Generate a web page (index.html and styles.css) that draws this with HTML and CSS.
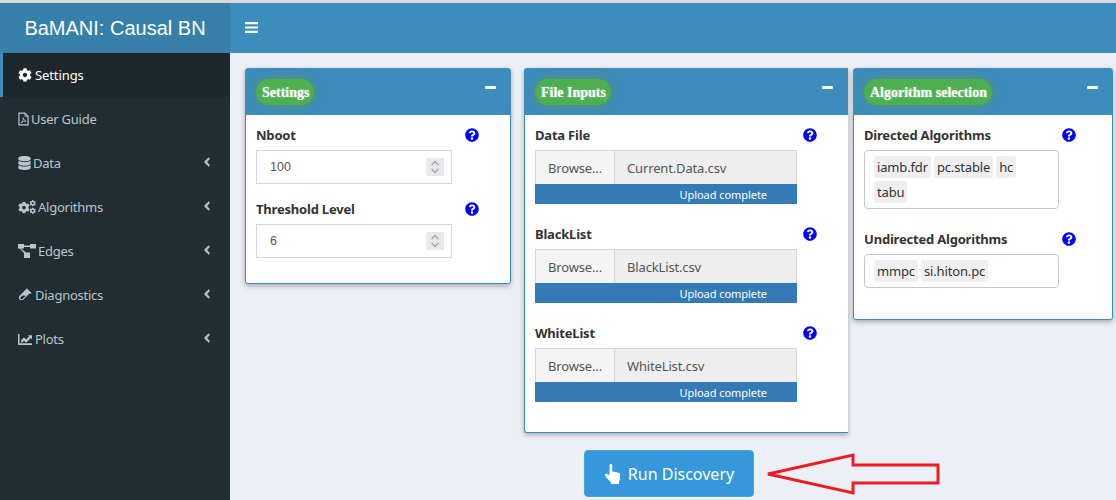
FILE: index.html
```html
<!DOCTYPE html>
<html lang="en">
<head>
<meta charset="utf-8">
<title>BaMANI: Causal BN</title>
<link rel="stylesheet" href="styles.css">
</head>
<body>
<svg class="defs" width="0" height="0" aria-hidden="true">
  <defs>
    <symbol id="i-gear" viewBox="0 0 512 512"><path d="M487.4 315.7l-42.6-24.6c4.3-23.2 4.3-47 0-70.2l42.6-24.6c4.9-2.8 7.1-8.6 5.5-14-11.1-35.6-30-67.8-54.7-94.6-3.8-4.1-10-5.1-14.8-2.3L380.8 110c-17.9-15.4-38.5-27.3-60.8-35.1V25.8c0-5.6-3.9-10.5-9.4-11.7-36.7-8.2-74.3-7.8-109.2 0-5.5 1.2-9.4 6.1-9.4 11.7V75c-22.2 7.9-42.8 19.8-60.8 35.1L88.7 85.5c-4.9-2.8-11-1.9-14.8 2.3-24.7 26.7-43.6 58.9-54.7 94.6-1.7 5.4.6 11.2 5.5 14L67.3 221c-4.3 23.2-4.3 47 0 70.2l-42.6 24.6c-4.9 2.8-7.1 8.6-5.5 14 11.1 35.6 30 67.8 54.7 94.6 3.8 4.1 10 5.1 14.8 2.3l42.6-24.6c17.9 15.4 38.5 27.3 60.8 35.1v49.2c0 5.6 3.9 10.5 9.4 11.7 36.7 8.2 74.3 7.8 109.2 0 5.5-1.2 9.4-6.1 9.4-11.7v-49.2c22.2-7.9 42.8-19.8 60.8-35.1l42.6 24.6c4.9 2.8 11 1.9 14.8-2.3 24.7-26.7 43.6-58.9 54.7-94.6 1.5-5.5-.7-11.3-5.6-14.1zM256 336c-44.1 0-80-35.9-80-80s35.9-80 80-80 80 35.9 80 80-35.9 80-80 80z"/></symbol>
    <symbol id="i-left" viewBox="0 0 256 512"><path d="M31.7 239l136-136c9.4-9.4 24.6-9.4 33.9 0l22.6 22.6c9.4 9.4 9.4 24.6 0 33.9L127.9 256l96.4 96.4c9.4 9.4 9.4 24.6 0 33.9L201.7 409c-9.4 9.4-24.6 9.4-33.9 0l-136-136c-9.5-9.4-9.5-24.6-.1-34z"/></symbol>
    <symbol id="i-help" viewBox="0 0 512 512"><path d="M504 256c0 136.997-111.043 248-248 248S8 392.997 8 256C8 119.083 119.043 8 256 8s248 111.083 248 248zM262.655 90c-54.497 0-89.255 22.957-116.549 63.758-3.536 5.286-2.353 12.415 2.715 16.258l34.699 26.31c5.205 3.947 12.621 3.008 16.665-2.122 17.864-22.658 30.113-35.797 57.303-35.797 20.429 0 45.698 13.148 45.698 32.958 0 14.976-12.363 22.667-32.534 33.976C247.128 238.528 216 254.941 216 296v4c0 6.627 5.373 12 12 12h56c6.627 0 12-5.373 12-12v-1.333c0-28.462 83.186-29.647 83.186-106.667 0-58.002-60.165-102-116.531-102zM256 338c-25.365 0-46 20.635-46 46 0 25.364 20.635 46 46 46s46-20.636 46-46c0-25.365-20.635-46-46-46z"/></symbol>
    <symbol id="i-spin" viewBox="0 0 18 18"><path class="spin-line" d="M5.5 7 9 3.5 12.500 7M5.500 11 9 14.500 12.500 11"/></symbol>
  </defs>
</svg>
<div class="app">
  <aside class="sidebar">
    <div class="logo">BaMANI: Causal BN</div>
    <nav class="menu">
      <a class="item active"><svg class="ic ic-gear"><use href="#i-gear"/></svg><span>Settings</span></a>
      <a class="item"><svg class="ic ic-file" viewBox="0 0 12 15"><path class="outline" d="M1 1h6.500L11 4.500V14H1z"/><path class="outline thin" d="M7.500 1v3.500H11M3 12c2-1 3-4 2.700-6 .3 2 1.500 3.500 3.300 4-2-.3-4 .2-6 2z"/></svg><span>User Guide</span></a>
      <a class="item"><svg class="ic ic-db" viewBox="0 0 448 512"><path d="M448 73.143v45.714C448 159.143 347.667 192 224 192S0 159.143 0 118.857V73.143C0 32.857 100.333 0 224 0s224 32.857 224 73.143zM448 176v102.857C448 319.143 347.667 352 224 352S0 319.143 0 278.857V176c48.125 33.143 136.208 48.572 224 48.572S399.874 209.143 448 176zm0 160v102.857C448 479.143 347.667 512 224 512S0 479.143 0 438.857V336c48.125 33.143 136.208 48.572 224 48.572S399.874 369.143 448 336z"/></svg><span>Data</span><svg class="chev"><use href="#i-left"/></svg></a>
      <a class="item"><svg class="ic ic-gears" viewBox="0 0 18 14"><use href="#i-gear" x="0" y="1.500" width="12" height="12"/><use href="#i-gear" x="11.500" y="0" width="6.500" height="6.500"/><use href="#i-gear" x="11.500" y="7.500" width="6.500" height="6.500"/></svg><span>Algorithms</span><svg class="chev"><use href="#i-left"/></svg></a>
      <a class="item"><svg class="ic ic-net" viewBox="0 0 18 14"><path d="M0 0h6v4.500H0zM12 0h6v4.500h-6zM6 8.500h6V14H6zM6 1.500h6v1.500H6zM3 4.500l5 4-1.200 1.200L1.800 4.500z"/></svg><span>Edges</span><svg class="chev"><use href="#i-left"/></svg></a>
      <a class="item"><svg class="ic ic-vial" viewBox="0 0 14 14"><path d="M9 .500 13.500 5l-1 1-.8-.8-6 6c-1.300 1.300-3 1.600-4.200.4S.800 8.500 2.100 7.200l6-6-.1-.1zM4.500 7.500 3 9c-.7.700-.800 1.500-.3 2s1.300.400 2-.3l3-3z"/></svg><span>Diagnostics</span><svg class="chev"><use href="#i-left"/></svg></a>
      <a class="item"><svg class="ic ic-chart" viewBox="0 0 14 11"><path d="M0 0h1.500v9.300H14V11H0zM2.800 6.600 6 3.600l2 2 3.100-3.200L9.900 1.200H14V5.300l-1.200-1.200-4.800 4.600-2-2-2.200 2.200z"/></svg><span>Plots</span><svg class="chev"><use href="#i-left"/></svg></a>
    </nav>
  </aside>
  <div class="main">
    <header class="navbar">
      <svg class="bars" viewBox="0 0 13 11"><path d="M0 0h13v2.200H0zM0 4.400h13v2.200H0zM0 8.800h13V11H0z"/></svg>
    </header>
    <main class="content">
      <div class="boxes">
        <section class="box box-settings">
          <div class="box-head"><h3 class="pill">Settings</h3><span class="minus"></span></div>
          <div class="box-body">
            <div class="label-row"><label>Nboot</label><svg class="help"><use href="#i-help"/></svg></div>
            <div class="num"><span>100</span><span class="spin"><svg><use href="#i-spin"/></svg></span></div>
            <div class="label-row gap"><label>Threshold Level</label><svg class="help"><use href="#i-help"/></svg></div>
            <div class="num"><span>6</span><span class="spin"><svg><use href="#i-spin"/></svg></span></div>
          </div>
        </section>
        <section class="box box-files">
          <div class="box-head"><h3 class="pill">File Inputs</h3><span class="minus"></span></div>
          <div class="box-body">
            <div class="label-row"><label>Data File</label><svg class="help"><use href="#i-help"/></svg></div>
            <div class="file"><span class="browse">Browse...</span><span class="fname">Current.Data.csv</span></div>
            <div class="progress">Upload complete</div>
            <div class="label-row gap2"><label>BlackList</label><svg class="help"><use href="#i-help"/></svg></div>
            <div class="file"><span class="browse">Browse...</span><span class="fname">BlackList.csv</span></div>
            <div class="progress">Upload complete</div>
            <div class="label-row gap2"><label>WhiteList</label><svg class="help"><use href="#i-help"/></svg></div>
            <div class="file"><span class="browse">Browse...</span><span class="fname">WhiteList.csv</span></div>
            <div class="progress">Upload complete</div>
          </div>
        </section>
        <section class="box box-algos">
          <div class="box-head"><h3 class="pill">Algorithm selection</h3><span class="minus"></span></div>
          <div class="box-body">
            <div class="label-row"><label>Directed Algorithms</label><svg class="help"><use href="#i-help"/></svg></div>
            <div class="tags"><span class="tag">iamb.fdr</span><span class="tag">pc.stable</span><span class="tag">hc</span><span class="tag">tabu</span></div>
            <div class="label-row gap"><label>Undirected Algorithms</label><svg class="help"><use href="#i-help"/></svg></div>
            <div class="tags"><span class="tag">mmpc</span><span class="tag">si.hiton.pc</span></div>
          </div>
        </section>
      </div>
      <button class="run" type="button"><svg class="hand" viewBox="0 0 16 20"><path d="M5 1.500c0-.8.600-1.500 1.400-1.500s1.400.700 1.400 1.500V8c.3-.5 2.300-.7 2.600.2.500-.5 2.200-.4 2.500.6.800-.4 2.600-.1 2.600 1.400v4c0 1.400-.4 2.400-1 3.500V20H6.500v-1.500C5 17 3.500 15 1 12.500c-1.500-1.700.6-3.500 2.200-2.200L5 11.500z"/></svg><span>Run Discovery</span></button>
    </main>
  </div>
  <svg class="arrow" viewBox="0 0 176 42"><path d="M2 21 87 2v10h85v18H87v10z"/></svg>
</div>
</body>
</html>
```
FILE: styles.css
```css
* { box-sizing: border-box; }
html, body { margin: 0; height: 500px; overflow: hidden; }
body {
  font-family: "Noto Sans", "Open Sans", sans-serif;
  font-size: 14px;
  color: #333;
  background: #ecf0f5;
  border-top: 3px solid #d9dadb;
}
.defs { position: absolute; }
.app { position: relative; display: flex; height: 497px; }

.sidebar { width: 230px; flex: none; background: #222d32; }
.logo {
  height: 50px;
  background: #367fa9;
  color: #fff;
  font: 20px/50px "Liberation Sans", Arial, sans-serif;
  text-align: center;
}
.menu { display: flex; flex-direction: column; }
.item {
  display: flex;
  align-items: center;
  height: 44px;
  padding: 0 18px 0 15px;
  color: #b8c7ce;
  font-size: 13px;
  letter-spacing: -.25px;
  border-left: 3px solid transparent;
}
.item.active { background: #1e282c; color: #fff; border-left-color: #3c8dbc; letter-spacing: -.1px; }
.item .ic { fill: currentColor; flex: none; margin-right: 3px; }
.ic-gear { width: 14px; height: 14px; }
.item .ic-file { width: 11px; height: 14px; margin-right: 2px; }
.item .ic-db { width: 13px; height: 14px; margin-right: 2px; }
.item .ic-gears { width: 18px; height: 14px; margin-right: 2px; }
.item .ic-net { width: 18px; height: 14px; margin-right: 2px; }
.ic-vial { width: 14px; height: 14px; }
.ic-chart { width: 14px; height: 11px; }
.outline { fill: none; stroke: currentColor; stroke-width: 1.300; }
.outline.thin { stroke-width: .9; }
.chev { width: 8px; height: 14px; margin-left: auto; margin-right: 1px; fill: currentColor; margin-top: -2px; }

.main { flex: 1; min-width: 0; display: flex; flex-direction: column; }
.navbar { height: 50px; background: #3c8dbc; display: flex; align-items: center; padding-left: 15px; flex: none; }
.bars { width: 13px; height: 11px; fill: #fff; margin-top: -1px; }
.content { flex: 1; padding: 15px 3px 0 15px; display: flex; flex-direction: column; }
.boxes { display: flex; align-items: flex-start; }

.box {
  background: #fff;
  border: 1px solid #3c8dbc;
  border-radius: 3px;
  box-shadow: 0 2px 5px rgba(0,0,0,.3);
}
.box-settings { width: 266px; margin-right: 13px; }
.box-files { width: 324px; margin-right: 5px; border-right: 0; border-radius: 3px 0 0 3px; }
.box-algos { width: 260px; }
.box-head {
  height: 46px;
  background: #3c8dbc;
  display: flex;
  justify-content: space-between;
  padding: 10px 14px 0 10px;
}
.box-files .box-head { padding-right: 15px; }
.pill {
  margin: 0;
  height: 26px;
  padding: 0 5px 0 6px;
  border-radius: 13px;
  background: #4caf50;
  color: #fff;
  font: bold 14px/27px "Liberation Serif", "Times New Roman", serif;
  box-shadow: 0 0 8px rgba(110,150,60,.8);
  text-shadow: 0 0 2px rgba(255,255,255,.5);
}
.minus { width: 11px; height: 3px; background: #fff; border-radius: 1px; margin-top: 7px; }
.box-body { padding: 10px; }
.box-settings .box-body { padding-bottom: 25px; }
.label-row { display: flex; justify-content: space-between; align-items: center; height: 20px; margin-bottom: 5px; }
.label-row.gap { margin-top: 15px; }
.label-row.gap2 { margin-top: 20px; }
.label-row label { font-weight: 700; font-size: 13px; letter-spacing: -.2px; color: #333; }
.box-settings .label-row { width: 223px; }
.box-files .label-row { width: 282px; }
.box-algos .label-row { width: 212px; }
.box-algos .label-row.gap { margin-top: 20px; }
.help { width: 14px; height: 14px; fill: #00f; flex: none; }

.num {
  width: 196px;
  height: 34px;
  border: 1px solid #d2d6de;
  display: flex;
  align-items: center;
  justify-content: space-between;
  padding: 0 7px 0 13px;
  font: 12.5px "Liberation Sans", Arial, sans-serif;
  color: #555;
}
.spin { width: 18px; height: 18px; background: #e9e9ed; display: block; }
.spin svg { display: block; width: 18px; height: 18px; }
.spin-line { fill: none; stroke: #9a9aa2; stroke-width: 1.100; }

.file { width: 262px; height: 34px; display: flex; font-size: 13px; letter-spacing: -.15px; color: #555; }
.browse {
  width: 80px;
  background: #f4f4f4;
  border: 1px solid #d2d6de;
  border-bottom: 0;
  display: flex; align-items: center; justify-content: center;
}
.fname {
  flex: 1;
  background: #eee;
  border: 1px solid #d2d6de;
  border-left: 0;
  border-bottom: 0;
  padding-left: 12px;
  display: flex; align-items: center;
}
.progress {
  width: 262px;
  height: 20px;
  background: #337ab7;
  color: #fff;
  font-size: 11px;
  letter-spacing: -.05px;
  line-height: 22px;
  text-align: right;
  padding-right: 30px;
}
.box-files .box-body { padding-bottom: 30px; }

.tags {
  width: 195px;
  border: 1px solid #c8c8c8;
  border-radius: 4px;
  padding: 5px 9px 5px;
  display: flex;
  flex-wrap: wrap;
  gap: 3px;
  font-size: 13px;
  letter-spacing: -.15px;
}
.tag { height: 22px; line-height: 22px; padding: 0 3px; background: #efefef; border-radius: 3px; }
.box-algos .box-body { padding-bottom: 31px; }

.run {
  align-self: flex-start;
  margin: auto 0 3px 339px;
  width: 170px;
  height: 47px;
  background: #3498db;
  border: 1px solid #4aa3df;
  border-radius: 4px;
  color: #fff;
  font: 16px "Noto Sans", "Open Sans", sans-serif;
  display: flex;
  align-items: center;
  justify-content: center;
  gap: 7px;
  padding: 0;
}
.hand { width: 17px; height: 20px; fill: #fff; }

.arrow {
  position: absolute;
  left: 766px;
  top: 450px;
  width: 176px;
  height: 42px;
  fill: none;
  stroke: #ed1c24;
  stroke-width: 3;
}
```
